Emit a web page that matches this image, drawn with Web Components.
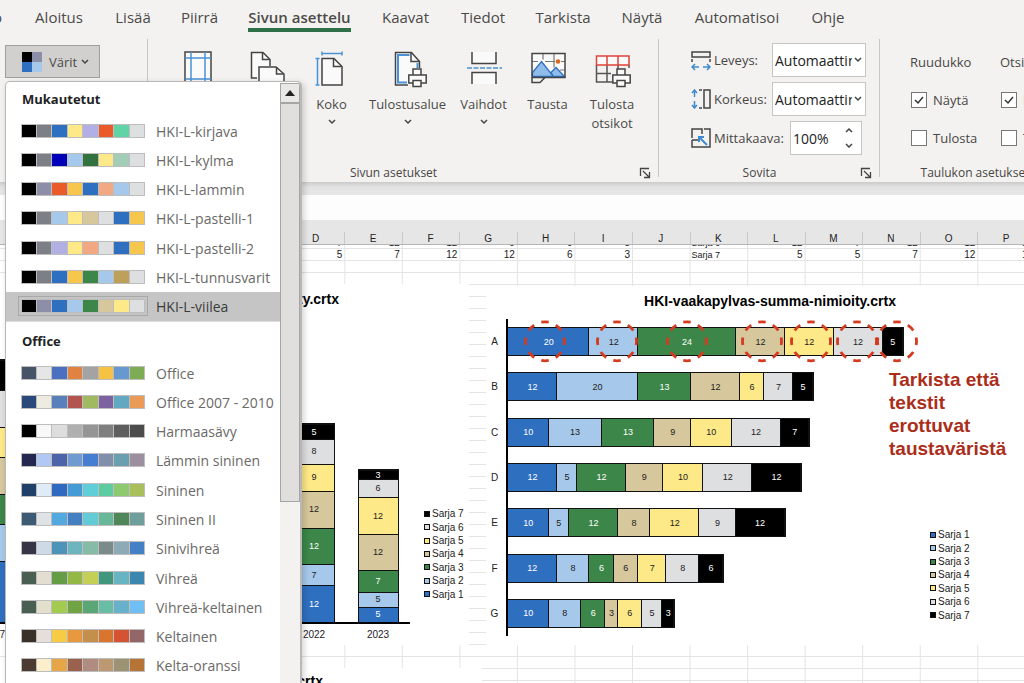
<!DOCTYPE html>
<html lang="fi">
<head>
<meta charset="utf-8">
<title>Sivun asettelu</title>
<style>
html, body { margin: 0; height: 100%; }
body { font-family: "Open Sans", "Noto Sans", sans-serif; color: #484644; background: #fff; overflow: hidden; }
</style>
</head>
<body>
<excel-app></excel-app>
<script>
const SERIES = ['#2f6fc0', '#a6c8ea', '#3b8648', '#d6c79c', '#fde987', '#dedfe1', '#000000'];
const lightText = i => i === 0 || i === 2 || i === 6;

const element = (name, css, html, init) => {
  const template = document.createElement('template');
  template.innerHTML = `<style>*{box-sizing:border-box}${css}</style>${html}`;
  customElements.define(name, class extends HTMLElement {
    constructor() {
      super();
      this.attachShadow({ mode: 'open' }).append(template.content.cloneNode(true));
    }
    connectedCallback() { if (init && !this.ready) { this.ready = true; init(this, this.shadowRoot); } }
  });
};

const PRINTER = '<g stroke="#444" stroke-width="1.5" fill="#fafafa"><path d="M25 25v-6h8v6"/><path d="M20.8 25h17.400v8h-17.400z"/><path d="M25 30.500h8v6h-8z"/></g>';
const ICONS = {
  margins: '<path d="M7 2h26v37h-26z" fill="#fafafa" stroke="#444" stroke-width="1.5"/><path d="M13 2v37M27 2v37M7 8h26M7 29h26" stroke="#4a92d4" stroke-width="1.5"/>',
  orientation: '<path d="M10 28H4.500V2.500h11.500l7 7V16" fill="#fafafa" stroke="#444" stroke-width="1.5"/><path d="M15.500 2.500v7h7" fill="none" stroke="#444" stroke-width="1.5"/><path d="M12 42V17h17l8 7v18z" fill="#fafafa" stroke="#444" stroke-width="1.5"/><path d="M29.500 17v7h7" fill="none" stroke="#444" stroke-width="1.5"/>',
  size: '<path d="M10 8.500h12l8 8V35H10z" fill="#fafafa" stroke="#444" stroke-width="1.5"/><path d="M21.500 8.500v8h8" fill="none" stroke="#444" stroke-width="1.500"/><path d="M10 3.500h20M10 1.500v4M30 1.500v4M5.500 8v27M3.500 8.500h4M3.500 35h4" stroke="#4a92d4" stroke-width="1.5"/>',
  area: '<path d="M20 35H7.500V2.500h16l8 9V18" fill="#fafafa" stroke="#444" stroke-width="1.5"/><path d="M19 32.500h-9V5h11.500M29.500 13v5" fill="none" stroke="#4a92d4" stroke-width="2"/><path d="M23 2.500v9h8.500" fill="none" stroke="#444" stroke-width="1.5"/>' + PRINTER,
  breaks: '<path d="M8 2v11.500h24V2M8 34V22.500h24V34" fill="#fafafa" stroke="#444" stroke-width="1.5"/><path d="M3 18h35" stroke="#4a92d4" stroke-width="1.500" stroke-dasharray="5 1.500"/>',
  background: '<path d="M4 3.500h33v24H4z" fill="#fafafa"/><path d="M15 3.500v6M26 3.500v14M4 11.500h6M17 11.500h10M33 11.500h4M32 20h5" stroke="#777" stroke-width="1.200"/><path d="M4.500 26.500v-4l9-11 12 15zM23 22.500l5-5 8.500 9h-11z" fill="#8fbce9" stroke="#2f6fc0" stroke-width="1.300"/><path d="M4 3.500h33v24H4zM4 27.500v5h8l5-5" fill="none" stroke="#444" stroke-width="1.5"/><circle cx="30" cy="11.500" r="2.300" fill="#d9691e"/>',
  titles: '<path d="M4.500 15v17H20M4.500 23.500H19M15 15v17M26 15v4M37 15v3" fill="none" stroke="#555" stroke-width="1.500"/><path d="M4.500 6h32.500v9H4.500zM15 6v9M26 6v9" fill="#fafafa" stroke="#e0433a" stroke-width="1.500"/>' + PRINTER,
  width: '<path d="M1 2h18v5H1zM1 9v3M19 9v3" fill="none" stroke="#444" stroke-width="1.500"/><path d="M1 17h7M12 17h7M4 14l-3 3 3 3M16 14l3 3-3 3" fill="none" stroke="#3e8ad0" stroke-width="1.500"/>',
  height: '<path d="M13 1h6v18h-6zM8 1h3M8 19h3" fill="none" stroke="#444" stroke-width="1.500"/><path d="M3.500 1v7M3.500 12v7M1 4l2.500-3L6 4M1 16l2.500 3L6 16" fill="none" stroke="#3e8ad0" stroke-width="1.500"/>',
  scale: '<path d="M1 10V1h10v5M1 12v7h18V1h-6M1 12h6" fill="none" stroke="#444" stroke-width="1.500"/><path d="M16 17L8 9M8 14V9h5" fill="none" stroke="#3e8ad0" stroke-width="2"/>'
};

element('ui-chevron', `
  :host { display: block; width: 8px; height: 6px; }
  :host([up]) { transform: rotate(180deg); }
  svg { display: block; }
`, `<svg width="8" height="6" viewBox="0 0 8 6" fill="none" stroke="#444" stroke-width="1.500"><path d="M1 1l3 3 3-3"/></svg>`);

element('ribbon-tabs', `
  :host { display: block; }
  nav { display: grid; grid-template-columns: 18px 82px 66px 67px 133px 79px 76px 84px 74px 116px 66px; height: 36px; }
  a { display: flex; justify-content: center; color: #4b4a48; text-decoration: none; font-size: 15px; line-height: 20px; padding-top: 7px; white-space: nowrap; }
  a:first-child { justify-content: flex-end; padding-right: 16px; overflow: hidden; }
  a span { height: 25px; }
  a[aria-current] span { font-weight: 600; border-bottom: 4px solid #2f7048; }
`, `<nav aria-label="Valintanauha">
  <a href="#"><span>Tiedosto</span></a><a href="#"><span>Aloitus</span></a><a href="#"><span>Lisää</span></a><a href="#"><span>Piirrä</span></a><a href="#" aria-current="page"><span>Sivun asettelu</span></a><a href="#"><span>Kaavat</span></a><a href="#"><span>Tiedot</span></a><a href="#"><span>Tarkista</span></a><a href="#"><span>Näytä</span></a><a href="#"><span>Automatisoi</span></a><a href="#"><span>Ohje</span></a></nav>`);

element('ribbon-group', `
  :host { display: flex; flex-direction: column; flex: none; margin: 3px 0 1px; background: linear-gradient(#c8c6c4, #c8c6c4) right top / 1px calc(100% - 4px) no-repeat; }
  .content { flex: 1; display: flex; }
  footer { display: flex; height: 16px; align-items: center; font-size: 12px; line-height: 16px; white-space: nowrap; }
  footer span { flex: 1; text-align: center; }
  button { border: 0; background: none; padding: 0; width: 20px; height: 12px; display: block; }
  button svg { display: block; }
`, `<div class="content"><slot></slot></div><footer></footer>`, (host, root) => {
  const label = host.getAttribute('label');
  if (!label) return;
  root.querySelector('footer').innerHTML = `<span>${label}</span>` + (host.hasAttribute('launcher')
    ? `<button aria-label="${label}: lisää asetuksia"><svg width="12" height="12" viewBox="0 0 12 12" fill="none" stroke="#444"><path d="M1.500 9V1.500H10M4 4l6 6M10.500 5v5.500H5" stroke-width="1.300"/></svg></button>` : '');
});

element('ribbon-button', `
  :host { display: block; }
  button { display: flex; flex-direction: column; align-items: center; width: 100%; border: 0; background: none; padding: 11px 0 0; font: inherit; font-size: 13px; line-height: 19px; color: #4b4a48; }
  svg { display: block; overflow: visible; margin-bottom: 5px; }
  ui-chevron { margin-top: 5px; }
`, `<button><svg width="40" height="40" viewBox="0 0 40 40" fill="none"></svg><slot></slot></button>`, (host, root) => {
  root.querySelector('svg').innerHTML = ICONS[host.getAttribute('icon')];
  if (host.title) root.querySelector('button').setAttribute('aria-label', host.title);
  if (host.hasAttribute('menu')) root.querySelector('button').append(document.createElement('ui-chevron'));
});

element('fit-fields', `
  :host { display: block; padding: 4px 0 0 32px; font-size: 13px; }
  .row { display: grid; grid-template-columns: 23px 58px 94px; align-items: center; height: 34px; margin-bottom: 5px; }
  .row.zoom { grid-template-columns: 23px 76px 72px; margin-bottom: 0; }
  label { white-space: nowrap; }
  .box { display: flex; align-items: center; height: 34px; background: #fff; border: 1px solid #c8c6c4; }
  select, input { appearance: none; border: 0; background: transparent; font: inherit; font-size: 14px; color: #222; padding: 0 0 0 2px; margin: 0; height: 32px; width: 79px; border-radius: 0; outline: 0; overflow: hidden; text-overflow: clip; }
  input { width: 54px; }
  select + ui-chevron { margin-left: 2px; }
  .spin { display: flex; flex-direction: column; gap: 10px; }
  .spin button { border: 0; background: none; padding: 0; display: block; }
`, `
  <div class="row"><svg width="20" height="21" viewBox="0 0 20 21">${ICONS.width}</svg><label for="w">Leveys:</label><div class="box"><select id="w"><option>Automaattinen</option></select><ui-chevron></ui-chevron></div></div>
  <div class="row"><svg width="20" height="20" viewBox="0 0 20 20">${ICONS.height}</svg><label for="h">Korkeus:</label><div class="box"><select id="h"><option>Automaattinen</option></select><ui-chevron></ui-chevron></div></div>
  <div class="row zoom"><svg width="20" height="20" viewBox="0 0 20 20">${ICONS.scale}</svg><label for="z">Mittakaava:</label><div class="box"><input id="z" type="text" value="100%"><div class="spin"><button aria-label="Suurenna"><ui-chevron up></ui-chevron></button><button aria-label="Pienennä"><ui-chevron></ui-chevron></button></div></div></div>`);

element('sheet-option', `
  :host { display: flex; align-items: center; gap: 6px; height: 38px; }
  input { appearance: none; width: 16px; height: 16px; margin: 0; border: 1px solid #777; background: #fff; flex: none; }
  input:checked { background: #fff url("data:image/svg+xml,%3Csvg xmlns='http://www.w3.org/2000/svg' viewBox='0 0 14 14'%3E%3Cpath d='M3 7l3 3 5-6' fill='none' stroke='%23333' stroke-width='1.5'/%3E%3C/svg%3E"); }
`, `<input type="checkbox" id="c"><label for="c"><slot></slot></label>`, (host, root) => {
  root.querySelector('input').checked = host.hasAttribute('checked');
});

element('app-ribbon', `
  :host { display: block; background: #f3f2f1; overflow: hidden; }
  .body { display: flex; height: 146px; }
  .theme { width: 148px; }
  .page { width: 511px; }
  .fit { width: 221px; }
  .options { width: 190px; background: none; }
  .colors { display: flex; align-items: center; gap: 7px; width: 95px; height: 33px; margin: 6px 0 0 5px; padding: 0 0 0 16px; border: 1px solid #a19f9d; background: #d2d0ce; font: inherit; font-size: 13px; color: #4b4a48; }
  .colors i { width: 20px; height: 20px; background: conic-gradient(#8d8fa8 25%, #a6c8ea 0 50%, #2f6fc0 0 75%, #000 0); }
  .colors ui-chevron { margin-left: -3px; }
  .tools { display: grid; grid-template-columns: 64px 74px 55px 97px 55px 73px 56px; padding-left: 18px; }
  .checks { display: grid; grid-template-columns: 90px 90px; align-content: start; padding: 4px 0 0 31px; font-size: 13px; white-space: nowrap; }
  .checks b { font-weight: 400; height: 38px; line-height: 38px; margin-left: -1px; }
`, `<ribbon-tabs></ribbon-tabs>
<div class="body">
  <ribbon-group class="theme"><button class="colors" aria-expanded="true"><i></i>Värit <ui-chevron></ui-chevron></button></ribbon-group>
  <ribbon-group class="page" label="Sivun asetukset" launcher><div class="tools">
    <ribbon-button icon="margins" title="Reunukset"></ribbon-button>
    <ribbon-button icon="orientation" title="Suunta"></ribbon-button>
    <ribbon-button icon="size" menu>Koko</ribbon-button>
    <ribbon-button icon="area" menu>Tulostusalue</ribbon-button>
    <ribbon-button icon="breaks" menu>Vaihdot</ribbon-button>
    <ribbon-button icon="background">Tausta</ribbon-button>
    <ribbon-button icon="titles">Tulosta otsikot</ribbon-button></div></ribbon-group>
  <ribbon-group class="fit" label="Sovita" launcher><fit-fields></fit-fields></ribbon-group>
  <ribbon-group class="options" label="Taulukon asetukset"><div class="checks">
    <b>Ruudukko</b><b>Otsikot</b>
    <sheet-option checked>Näytä</sheet-option><sheet-option checked>Näytä</sheet-option>
    <sheet-option>Tulosta</sheet-option><sheet-option>Tulosta</sheet-option></div></ribbon-group>
</div>`);

element('color-scheme', `
  :host { display: block; }
  button { display: flex; align-items: center; gap: 8px; width: 100%; height: 100%; padding: 0 0 0 12px; border: 0; background: none; font: inherit; font-size: 14px; line-height: 20px; color: #6b6967; text-align: left; white-space: nowrap; }
  .swatches { display: grid; grid-template-columns: repeat(8, 1fr); width: 130px; height: 20px; padding: 2px; border: 1px solid transparent; }
  i { border: 1px solid #bdbdbd; border-left-width: 0; }
  i:first-child { border-left-width: 1px; }
  :host([selected]) button { background: #c5c5c5; color: #3b3a39; }
  :host([selected]) .swatches { border-color: #a8a8a8; }
  .name { padding-top: 2px; }
`, `<button><span class="swatches"></span><span class="name"><slot></slot></span></button>`, (host, root) => {
  root.querySelector('.swatches').innerHTML = host.getAttribute('colors').split(' ').map(c => `<i style="background:#${c}"></i>`).join('');
});

const CUSTOM = [
  ['HKI-L-kirjava', '000 7c7f86 2f6fc0 fde987 b1afe4 ea5b29 62d3a6 dedfe1'],
  ['HKI-L-kylma', '000 7c7f86 0000b8 a6c8ea 33733f fde987 a2ceb8 dedfe1'],
  ['HKI-L-lammin', '000 8d8fa8 ea5b29 f6c74c 2f6fc0 f2a983 a6c8ea dedfe1'],
  ['HKI-L-pastelli-1', '000 7c7f86 a6c8ea fde987 d6c79c dedfe1 2f6fc0 f6c74c'],
  ['HKI-L-pastelli-2', '000 7c7f86 b1afe4 fde987 f2a983 dedfe1 2f6fc0 f6c74c'],
  ['HKI-L-tunnusvarit', '000 7c7f86 2f6fc0 f6c74c 3b8648 a6c8ea bda15b dedfe1'],
  ['HKI-L-viilea', '000 8d8fa8 2f6fc0 a6c8ea 3b8648 d6c79c fde987 dedfe1']
];
const OFFICE = [
  ['Office', '475468 e7e6e6 4c70c0 e08242 a3a3a3 f6c243 6798d0 7dac55'],
  ['Office 2007 - 2010', '2a487a eeece1 5980ba b2544f 9fba60 7d63a0 63a8c1 ea9b57'],
  ['Harmaasävy', '000 f8f8f8 dddddd b0b0b0 959595 7f7f7f 5e5e5e 4c4c4c'],
  ['Lämmin sininen', '24284f b1c8f5 4d64a8 6f9bd0 457dd2 828fab 699fae 9c8fa0'],
  ['Sininen', '20406a dfecf8 3069c0 459bd6 60ced9 5dcca0 8dc96f a8bf5b'],
  ['Sininen II', '3c5a74 dfe3e5 53a8e0 447fc2 63cbd6 66b898 4f8758 6e9f9d'],
  ['Sinivihreä', '373545 cedbe6 4d93ba 6fb5be 84bca7 7a8b8a 8cabb6 4480c5'],
  ['Vihreä', '495f52 e3ded1 659d46 93b845 c3cf55 41977b 67b4c3 3b87b0'],
  ['Vihreä-keltainen', '495f52 e2dfcc a2cb50 6fa343 5aa674 68bea4 68b1cb 6fbff5'],
  ['Keltainen', '39302a e5dedb f8cb45 e99840 c48f4b da7530 d55233 936767'],
  ['Kelta-oranssi', '4b3b30 fbeecb e6a648 9a624e b08b80 bd9972 9c9375 b67537']
];
const schemes = (list, selected) => list.map(([name, colors]) =>
  `<color-scheme colors="${colors}"${name === selected ? ' selected' : ''}>${name}</color-scheme>`).join('');

element('color-menu', `
  :host { display: grid; grid-template-columns: 1fr 20px; background: #fff; border: 1px solid #b9b8b7; border-right-width: 2px; border-bottom: 0; border-radius: 5px 5px 0 0; padding-top: 1px; box-shadow: 2px 2px 6px rgba(0,0,0,.18); overflow: hidden; }
  h2 { margin: 0; padding-left: 16px; font-size: 13px; line-height: 33px; height: 33px; color: #222; font-weight: 700; }
  .list { display: grid; grid-auto-rows: 1fr; }
  .custom { height: 205px; }
  .office { height: 322px; }
  .custom + h2 { border-top: 1px solid #dcdcdc; height: 37px; line-height: 38px; }
  .scroll { background: #f3f2f1; }
  .scroll button { display: flex; align-items: center; justify-content: center; width: 100%; height: 20px; border: 1px solid #a5a5a5; background: #e9e8e7; padding: 0; }
  .thumb { height: 399px; border: 1px solid #a5a5a5; background: #e1dfdd; }
`, `<div><h2>Mukautetut</h2><div class="list custom">${schemes(CUSTOM, 'HKI-L-viilea')}</div>
<h2>Office</h2><div class="list office">${schemes(OFFICE)}</div></div>
<div class="scroll"><button aria-label="Vieritä ylös"><svg width="10" height="6" viewBox="0 0 10 6"><path d="M0 6l5-6 5 6z" fill="#222"/></svg></button><div class="thumb"></div></div>`);

element('chart-legend', `
  :host { display: grid; grid-auto-rows: 1fr; height: 94px; font-size: 10px; color: #222; white-space: nowrap; }
  div { display: flex; align-items: center; gap: 2px; }
  i { width: 6px; height: 6px; border: 1px solid #111; }
`, '', (host, root) => {
  const order = SERIES.map((c, i) => i);
  if (host.hasAttribute('reversed')) order.reverse();
  order.forEach(i => root.append(Object.assign(document.createElement('div'), { innerHTML: `<i style="background:${SERIES[i]}"></i>Sarja ${i + 1}` })));
});

const segments = (values, labels) => values.map((v, i) =>
  `<span style="flex-grow:${v};background:${SERIES[i]};color:${lightText(i) ? '#fff' : '#222'}">${labels ? v : ''}</span>`).join('');

const ROWS = { A: [20, 12, 24, 12, 12, 12, 5], B: [12, 20, 13, 12, 6, 7, 5], C: [10, 13, 13, 9, 10, 12, 7], D: [12, 5, 12, 9, 10, 12, 12], E: [10, 5, 12, 8, 12, 9, 12], F: [12, 8, 6, 6, 7, 8, 6], G: [10, 8, 6, 3, 6, 5, 3] };
const sum = list => list.reduce((a, b) => a + b, 0);

element('bar-chart', `
  :host { display: flex; flex-direction: column; background: #fff; }
  h3 { margin: 0; height: 33px; line-height: 30px; font-size: 14px; color: #000; text-align: center; white-space: nowrap; }
  .body { display: flex; height: 317px; position: relative; }
  .names, .plot { display: grid; grid-auto-rows: 1fr; align-items: center; }
  .names { width: 20px; font-size: 10px; padding-right: 3px; text-align: center; }
  .plot { flex: 1; border-left: 2px solid #000; }
  .bar { display: flex; height: 29px; border: 1px solid #111; border-left: 0; }
  .bar span { flex-basis: 0; display: flex; align-items: center; justify-content: center; font-size: 9px; box-shadow: inset -1px 0 #111; min-width: 0; }
  chart-legend { align-self: flex-end; width: 124px; margin-bottom: 14px; }
  svg { position: absolute; left: 0; top: 0; overflow: visible; pointer-events: none; }
`, `<h3>HKI-vaakapylvas-summa-nimioity.crtx</h3><div class="body"><div class="names">${Object.keys(ROWS).map(k => `<span>${k}</span>`).join('')}</div>
<div class="plot">${Object.values(ROWS).map(v => `<div class="bar" style="width:${sum(v) / 1.034}%">${segments(v, true)}</div>`).join('')}</div><chart-legend></chart-legend>
<svg width="440" height="46" viewBox="0 0 440 46" fill="none" stroke="#d43a1f" stroke-width="2.800">${[59, 131, 201, 276, 325, 371, 411].map(x => `<circle cx="${x}" cy="22.300" r="19.500" pathLength="16" stroke-dasharray="1 1" stroke-dashoffset=".5"/>`).join('')}</svg></div>`);

const YEARS = [['2017', [20, 12, 10, 12, 10, 12, 10], false], null, null, null, null, ['2022', [12, 7, 12, 12, 9, 8, 5], true], ['2023', [5, 5, 7, 12, 12, 6, 3], true]];

element('column-chart', `
  :host { display: flex; flex-direction: column; background: #fff; }
  h3 { margin: 0; height: 35px; line-height: 30px; font-size: 14px; color: #000; text-align: right; padding-right: 130px; white-space: nowrap; }
  .body { display: flex; }
  .plot { display: grid; grid-template-columns: repeat(7, 64px); height: 305px; border-bottom: 2px solid #000; align-items: end; justify-items: center; }
  .col { display: flex; flex-direction: column-reverse; width: 41px; border: 1px solid #111; border-bottom: 0; }
  .col span { flex-basis: 0; display: flex; align-items: center; justify-content: center; font-size: 9px; box-shadow: inset 0 1px #111; min-height: 0; }
  .years { display: grid; grid-template-columns: repeat(7, 64px); text-align: center; font-size: 10px; line-height: 12px; padding-top: 5px; }
  chart-legend { align-self: flex-end; margin: 0 0 23px 14px; }
`, `<h3>HKI-pystypylvas-summa-nimioity.crtx</h3><div class="body"><div class="plot">${YEARS.map(y => y ? `<div class="col" style="height:${sum(y[1]) / .99}%">${segments(y[1], y[2])}</div>` : '<div></div>').join('')}</div><chart-legend reversed></chart-legend></div>
<div class="years">${YEARS.map(y => `<span>${y ? y[0] : ''}</span>`).join('')}</div>`);

const LETTERS = ['', '', '', '', '', 'D', 'E', 'F', 'G', 'H', 'I', 'J', 'K', 'L', 'M', 'N', 'O', 'P'];
const CUT = ['', '', '', '', '', '7', '12', '12', '9', '9', '8', '', 'Sarja 6', '12', '7', '12', '12', '12'];
const LAST = ['', '', '', '', '', '5', '7', '12', '12', '6', '3', '', 'Sarja 7', '5', '5', '7', '12', '12'];
const cells = list => list.map(v => `<td${/^S/.test(v) ? ' class="text"' : ''}><div><span>${v}</span></div></td>`).join('');

element('work-sheet', `
  :host { display: block; position: relative; overflow: hidden; font-family: "Liberation Sans", Arial, sans-serif; color: #222;
    background:
      linear-gradient(to top, #e4e4e4 1px, transparent 1px) 0 5px / 100% 12px,
      linear-gradient(to right, #e4e4e4 1px, transparent 1px) -1px 0 / calc((100% + 12px) / 18) 100%, #fff; }
  table { width: calc(100% + 12px); margin-left: -1px; table-layout: fixed; border-collapse: separate; border-spacing: 0; }
  th, td { padding: 0; font-weight: 400; font-size: 10px; }
  th { height: 25px; padding-top: 13px; line-height: 11px; background: linear-gradient(to right, #c9c9c9 1px, transparent 1px) 0 12px no-repeat, #e6e6e6; border-bottom: 1px solid #b5b5b5; }
  td div { display: flex; justify-content: flex-end; align-items: flex-end; height: 12px; padding-right: 2px; line-height: 12px; overflow: hidden; }
  td.text div { justify-content: flex-start; padding-left: 2px; font-size: 9px; }
  .cut div { height: 4px; line-height: 12px; }
  column-chart, bar-chart, .note, .next { position: absolute; }
  column-chart { left: -38px; top: 64px; width: 507px; height: 361px; }
  bar-chart { left: 486px; top: 66px; width: 568px; height: 359px; }
  .note { left: 889px; top: 148px; width: 130px; margin: 0; font-size: 19px; line-height: 23px; font-weight: 700; color: #ab2d1a; }
  .next { left: 0; top: 448px; width: 482px; height: 200px; margin: 0; background: #fff; font-size: 14px; line-height: 26px; color: #000; text-align: right; padding-right: 159px; }
`, `<table><thead><tr>${LETTERS.map(l => `<th scope="col">${l}</th>`).join('')}</tr></thead>
<tbody><tr class="cut">${cells(CUT)}</tr><tr>${cells(LAST)}</tr></tbody></table>
<column-chart></column-chart><bar-chart></bar-chart>
<p class="note">Tarkista että tekstit erottuvat taustaväristä</p>
<h3 class="next">HKI-pystypylvas-osuus.crtx</h3>`);

element('excel-app', `
  :host { display: flex; flex-direction: column; height: 100vh; position: relative; overflow: hidden; }
  .gap { height: 13px; flex: none; background: linear-gradient(#cbcac9, #e3e3e3 5px, #e6e6e6); }
  .formula { height: 25px; flex: none; background: #fdfdfd; }
  work-sheet { flex: 1; }
  color-menu { position: absolute; left: 5px; top: 81px; width: 297px; bottom: 0; }
`, `<app-ribbon></app-ribbon><div class="gap"></div><div class="formula"></div><work-sheet></work-sheet><color-menu></color-menu>`);
</script>
</body>
</html>
